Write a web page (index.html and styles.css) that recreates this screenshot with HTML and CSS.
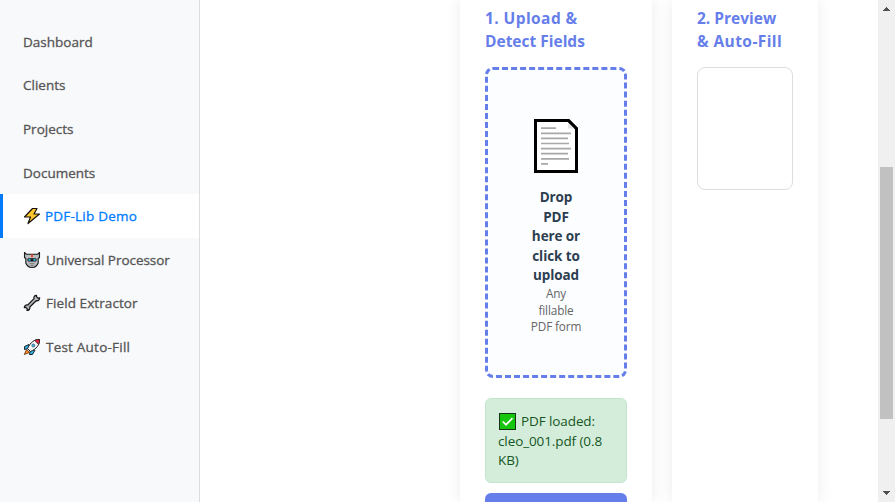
FILE: index.html
```
<!DOCTYPE html>
<html lang="en">
<head>
<meta charset="utf-8">
<title>PDF-Lib Demo</title>
<link rel="stylesheet" href="styles.css">
</head>
<body>
<div class="app">
  <nav class="sidebar">
    <a class="nav-item">Dashboard</a>
    <a class="nav-item">Clients</a>
    <a class="nav-item">Projects</a>
    <a class="nav-item">Documents</a>
    <a class="nav-item active">
      <svg class="emoji" viewBox="0 0 18 18"><path d="M9.500 1.500h4.500L11 7h5.500L5 16.500l2.500-6.500H1.500z" fill="#ffc52f" stroke="#17130b" stroke-width="1.200" stroke-linejoin="round"/></svg>
      <span class="loose">PDF-Lib Demo</span></a>
    <a class="nav-item">
      <svg class="emoji wide" viewBox="0 0 18 18"><path d="M1.500 1.500v5l1.300 1v4.500Q4.500 16.500 9 16.500t6.200-4.500V7.500l1.300-1v-5l-2 1.800h-11z" fill="#b9bcbf" stroke="#17191b" stroke-width="1.100" stroke-linejoin="round"/><path d="M8 3.500h2v2.700H8z" fill="#ee4c35"/><rect x="4.500" y="7.300" width="9" height="3.200" rx="1" fill="#15191c"/><path d="M5.500 8h2v1.700h-2zm5 0h2v1.700h-2z" fill="#26c3ef"/><path d="M6.500 12.700h5M7.500 14.500h3" stroke="#66696c" stroke-width=".8"/></svg>
      <span>Universal Processor</span></a>
    <a class="nav-item">
      <svg class="emoji wide" viewBox="0 0 18 18"><path d="M13.500 1.300c-2 .1-3 1.500-2.500 3.400L4.800 11c-2-.5-3.500.7-3.500 2.600l1.500-.3 1.500 1.500-.4 1.700c2 0 3.400-1.500 2.900-3.500L13.200 6.700c2 .5 3.500-.9 3.500-2.900l-1.700.4-1.500-1.500z" fill="#b4b6b9" stroke="#151719" stroke-width="1.200" stroke-linejoin="round"/></svg>
      <span class="field">Field Extractor</span></a>
    <a class="nav-item">
      <svg class="emoji wide" viewBox="0 0 18 18"><path d="M6 6.500 1.500 8.500v3l4-1zm6 5.500-2.500 4.500H6.500l.8-4z" fill="#31b8e9" stroke="#1a2227"/><path d="M3.500 11.500 1.300 16.500l5.200-2z" fill="#ff8a21" stroke="#5a2b12" stroke-width=".8"/><path d="M16.500 1.500c-5-.3-9 2.700-12 9l3 3c6-2.500 9.500-7 9-12z" fill="#f4f6f8" stroke="#191d20"/><path d="M16.500 1.500q-3-.3-5 1l4 4q1.300-2.500 1-5z" fill="#df2637" stroke="#191d20" stroke-width=".6"/><circle cx="10.300" cy="7.500" r="1.500" fill="#39bcea" stroke="#30383d" stroke-width=".6"/></svg>
      <span class="loose">Test Auto-Fill</span></a>
  </nav>
  <main class="main">
    <section class="card upload">
      <h3><span class="title-loose">1. Upload &amp;</span><br>Detect Fields</h3>
      <div class="dropzone">
        <svg class="doc" viewBox="0 0 44 54"><path d="M1.500 1.500h32.800l8.200 8.200v42.800h-41z" fill="#fff" stroke="#000" stroke-width="3"/><path d="M34 3v6.500h7z" fill="#e5e5e5"/><path d="M34 1l9 9" stroke="#000" stroke-width="3"/><path d="M7 9.200h15M7 14.300h30M7 19.400h27M7 24.500h28M7 29.600h30M7 34.700h27M7 39.800h28M7 44.900h7" stroke="#a8a8a8" stroke-width="1.700"/></svg>
        <strong>Drop<br>PDF<br>here or<br>click to<br>upload</strong>
        <small>Any<br>fillable<br>PDF form</small>
      </div>
      <div class="status"><svg class="check" viewBox="0 0 17 17"><rect x=".5" y=".5" width="16" height="16" fill="#16c60c" stroke="#123616"/><path d="m3.700 8.500 3.300 3.200 6.500-6.500" fill="none" stroke="#fff" stroke-width="1.700"/></svg>PDF loaded:<br>cleo_001.pdf (0.8<br>KB)</div>
      <div class="button"></div>
    </section>
    <section class="card preview">
      <h3>2. Preview<br><span class="title-loose">&amp; Auto-Fill</span></h3>
      <div class="frame"></div>
    </section>
  </main>
  <div class="scrollbar">
    <svg viewBox="0 0 17 17"><path d="M8 7h1v1h1v1h1v1h1v1H5v-1h1V9h1V8h1z" fill="#505050"/></svg>
    <div class="thumb"></div>
    <svg class="down" viewBox="0 0 17 17"><path d="M5 6h7v1h-1v1h-1v1H9v1H8V9H7V8H6V7H5z" fill="#505050"/></svg>
  </div>
</div>
</body>
</html>
```
FILE: styles.css
```
* { box-sizing: border-box; }
body {
  margin: 0;
  overflow: hidden;
  font-family: "Open Sans", "Noto Sans", sans-serif;
  font-size: 14px;
  background: #fff;
}
.app { display: flex; height: 502px; overflow: hidden; }
.sidebar {
  width: 200px;
  padding-top: 19.8px;
  background: #f8f9fa;
  border-right: 1px solid #ddd;
}
.nav-item {
  display: flex;
  align-items: center;
  height: 43.65px;
  padding-left: 20px;
  border-left: 3px solid transparent;
  color: #555;
  font-weight: 400;
  font-size: 13.5px;
  -webkit-text-stroke: .3px currentColor;
  white-space: nowrap;
}
.nav-item.active { background: #fff; border-left-color: #007bff; color: #007bff; }
.emoji { width: 18px; height: 18px; margin-right: 4px; flex: none; }
.emoji.wide { margin-right: 5px; }
.nav-item span { letter-spacing: -.04px; }
.nav-item .loose { letter-spacing: .22px; }
.nav-item .field { letter-spacing: .08px; }
.main {
  width: 678px;
  height: 502px;
  display: flex;
  gap: 20px;
  padding-left: 260px;
  overflow: hidden;
}
.card {
  height: 502px;
  padding: 7px 25px 0;
  background: #fff;
  box-shadow: 0 0 15px rgba(0, 0, 0, .08);
}
.upload { width: 192px; }
.preview { width: 146px; }
h3 {
  margin: 0 0 14px;
  font-size: 15.5px;
  line-height: 23px;
  font-weight: 700;
  color: #667eea;
  white-space: nowrap;
}
.title-loose { letter-spacing: .42px; }
.dropzone {
  height: 311px;
  padding-top: 49px;
  border: 3px dashed #667eea;
  border-radius: 8px;
  background: #fcfdff;
  display: flex;
  flex-direction: column;
  align-items: center;
  text-align: center;
  white-space: nowrap;
}
.doc { width: 44px; height: 54px; margin-bottom: 15px; flex: none; }
.dropzone strong { font-size: 13.5px; line-height: 19.6px; letter-spacing: -.1px; color: #2c3e50; }
.dropzone small { margin-top: -.6px; font-size: 11.8px; line-height: 16.5px; letter-spacing: -.15px; color: #666; }
.status {
  height: 85px;
  margin-top: 20px;
  padding: 13px 12px;
  background: #d4edda;
  border: 1px solid #c3e6cb;
  border-radius: 6px;
  color: #155724;
  font-size: 13.5px;
  line-height: 19.6px;
  letter-spacing: -.1px;
  white-space: nowrap;
}
.check { width: 17px; height: 17px; margin: 0 5px 0 1px; vertical-align: -4px; }
.button { height: 9px; margin-top: 10px; background: #667eea; border-radius: 6px 6px 0 0; }
.frame { height: 123px; border: 1px solid #ddd; border-radius: 8px; }
.scrollbar {
  width: 17px;
  display: flex;
  flex-direction: column;
  background: #f0f0f0;
}
.scrollbar svg { width: 17px; height: 17px; }
.thumb { width: 13px; height: 252px; margin: 150px 2px 0; background: #c1c1c1; }
.scrollbar .down { margin-top: auto; }
```
